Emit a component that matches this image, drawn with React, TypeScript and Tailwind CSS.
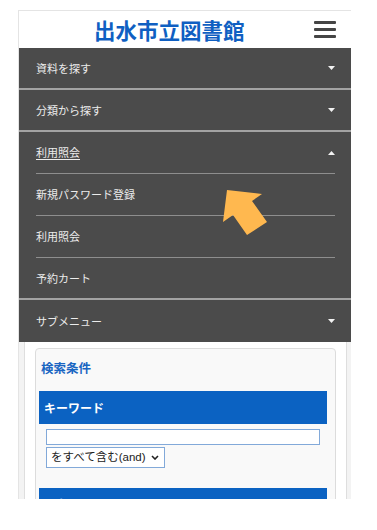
import React from "react";

const jp = { fontFamily: '"Noto Sans CJK JP", "Noto Sans", sans-serif' };

function Caret({ up = false }: { up?: boolean }) {
  return (
    <svg width="7" height="4" viewBox="0 0 7 4" className="block">
      {up ? <polygon points="0,4 7,4 3.5,0" fill="#f2f2f2" /> : <polygon points="0,0 7,0 3.5,4" fill="#f2f2f2" />}
    </svg>
  );
}

function TopItem({ label, caret = true }: { label: string; caret?: boolean }) {
  return (
    <div className="h-[42px] flex items-center justify-between pl-[17px] pr-[16px] border-b-2 border-[#a3a3a3]">
      <span className="text-[11px] text-[#ececec]">{label}</span>
      {caret && <Caret />}
    </div>
  );
}

function SubItem({ label, last = false }: { label: string; last?: boolean }) {
  if (last) {
    return (
      <div className="h-[42px] flex items-center pl-[17px] border-b-2 border-[#a3a3a3]">
        <span className="text-[11px] text-[#ececec]">{label}</span>
      </div>
    );
  }
  return (
    <div className="h-[42px] flex flex-col">
      <div className="flex-1 flex items-center pl-[17px]">
        <span className="text-[11px] text-[#ececec]">{label}</span>
      </div>
      <div className="ml-[17px] mr-[16px] h-px bg-[#8e8e8e]" />
    </div>
  );
}

export default function App() {
  return (
    <div className="w-[377px] h-[530px] bg-white relative overflow-hidden" style={jp}>
      <div className="absolute left-[18px] top-[10px] w-[333px] h-[489px] overflow-hidden border-t border-l border-[#e4e4e4] bg-white flex flex-col">
        {/* header */}
        <div className="h-[37px] flex items-center justify-between pl-[75px] pr-[15px] shrink-0">
          <h1 className="text-[21.5px] font-bold text-[#0f5fc2] leading-none">出水市立図書館</h1>
          <div className="flex flex-col gap-[4px]">
            <span className="block w-[22px] h-[3px] bg-[#454545] rounded-[1px]" />
            <span className="block w-[22px] h-[3px] bg-[#454545] rounded-[1px]" />
            <span className="block w-[22px] h-[3px] bg-[#454545] rounded-[1px]" />
          </div>
        </div>

        {/* menu */}
        <nav className="bg-[#4b4b4b] shrink-0">
          <TopItem label="資料を探す" />
          <TopItem label="分類から探す" />
          <div className="h-[42px] flex flex-col">
            <div className="flex-1 flex items-center justify-between pl-[17px] pr-[16px]">
              <span className="text-[11px] text-[#ececec] underline underline-offset-2">利用照会</span>
              <Caret up />
            </div>
            <div className="ml-[17px] mr-[16px] h-px bg-[#8e8e8e]" />
          </div>
          <SubItem label="新規パスワード登録" />
          <SubItem label="利用照会" />
          <SubItem label="予約カート" last />
          <div className="h-[42px] flex items-center justify-between pl-[17px] pr-[16px]">
            <span className="text-[11px] text-[#ececec]">サブメニュー</span>
            <Caret />
          </div>
        </nav>

        {/* content */}
        <div className="flex flex-1">
          <div className="w-[6px] bg-[#f3f3f3] border-r border-[#dedede]" />
          <div className="flex-1 bg-white px-[10px] pt-[6px]">
            <div className="border border-[#dcdcdc] rounded-[4px] bg-[#f9f9f9] h-[200px] pl-[3px]">
              <div className="pt-[11px] pl-[2px] text-[12.5px] leading-[16px] font-bold text-[#1a66c2]">検索条件</div>
              <div className="mt-[15px] w-[288px] h-[33px] bg-[#0b62c2] flex items-center pl-[5px] text-[12px] font-bold text-white">
                キーワード
              </div>
              <div className="ml-[7px] mt-[5px] w-[274px] h-[16px] border border-[#82a9d9] bg-white" />
              <div className="ml-[7px] mt-[2px] w-[119px] h-[21px] border border-[#82a9d9] bg-white flex items-center justify-between pl-[4px] pr-[5px]">
                <span className="text-[11.5px] text-[#222]" style={{ fontFamily: '"Liberation Sans", "Noto Sans CJK JP", sans-serif' }}>
                  をすべて含む(and)
                </span>
                <svg width="8" height="5" viewBox="0 0 8 5">
                  <polyline points="1,1 4,4 7,1" fill="none" stroke="#222" strokeWidth="1.6" />
                </svg>
              </div>
              <div className="mt-[20px] w-[288px] h-[33px] bg-[#0b62c2] flex items-center pl-[5px] text-[12px] font-bold text-white">
                著者
              </div>
            </div>
          </div>
          <div className="w-[5px] bg-[#f3f3f3] border-l border-[#dedede]" />
        </div>
      </div>

      {/* pointer arrow */}
      <svg className="absolute left-[220px] top-[185px]" width="50" height="52" viewBox="0 0 50 52">
        <polygon points="7,5 42,9 32,16 47,37 27,50 13,30 3,37" fill="#ffb84f" />
      </svg>
    </div>
  );
}
